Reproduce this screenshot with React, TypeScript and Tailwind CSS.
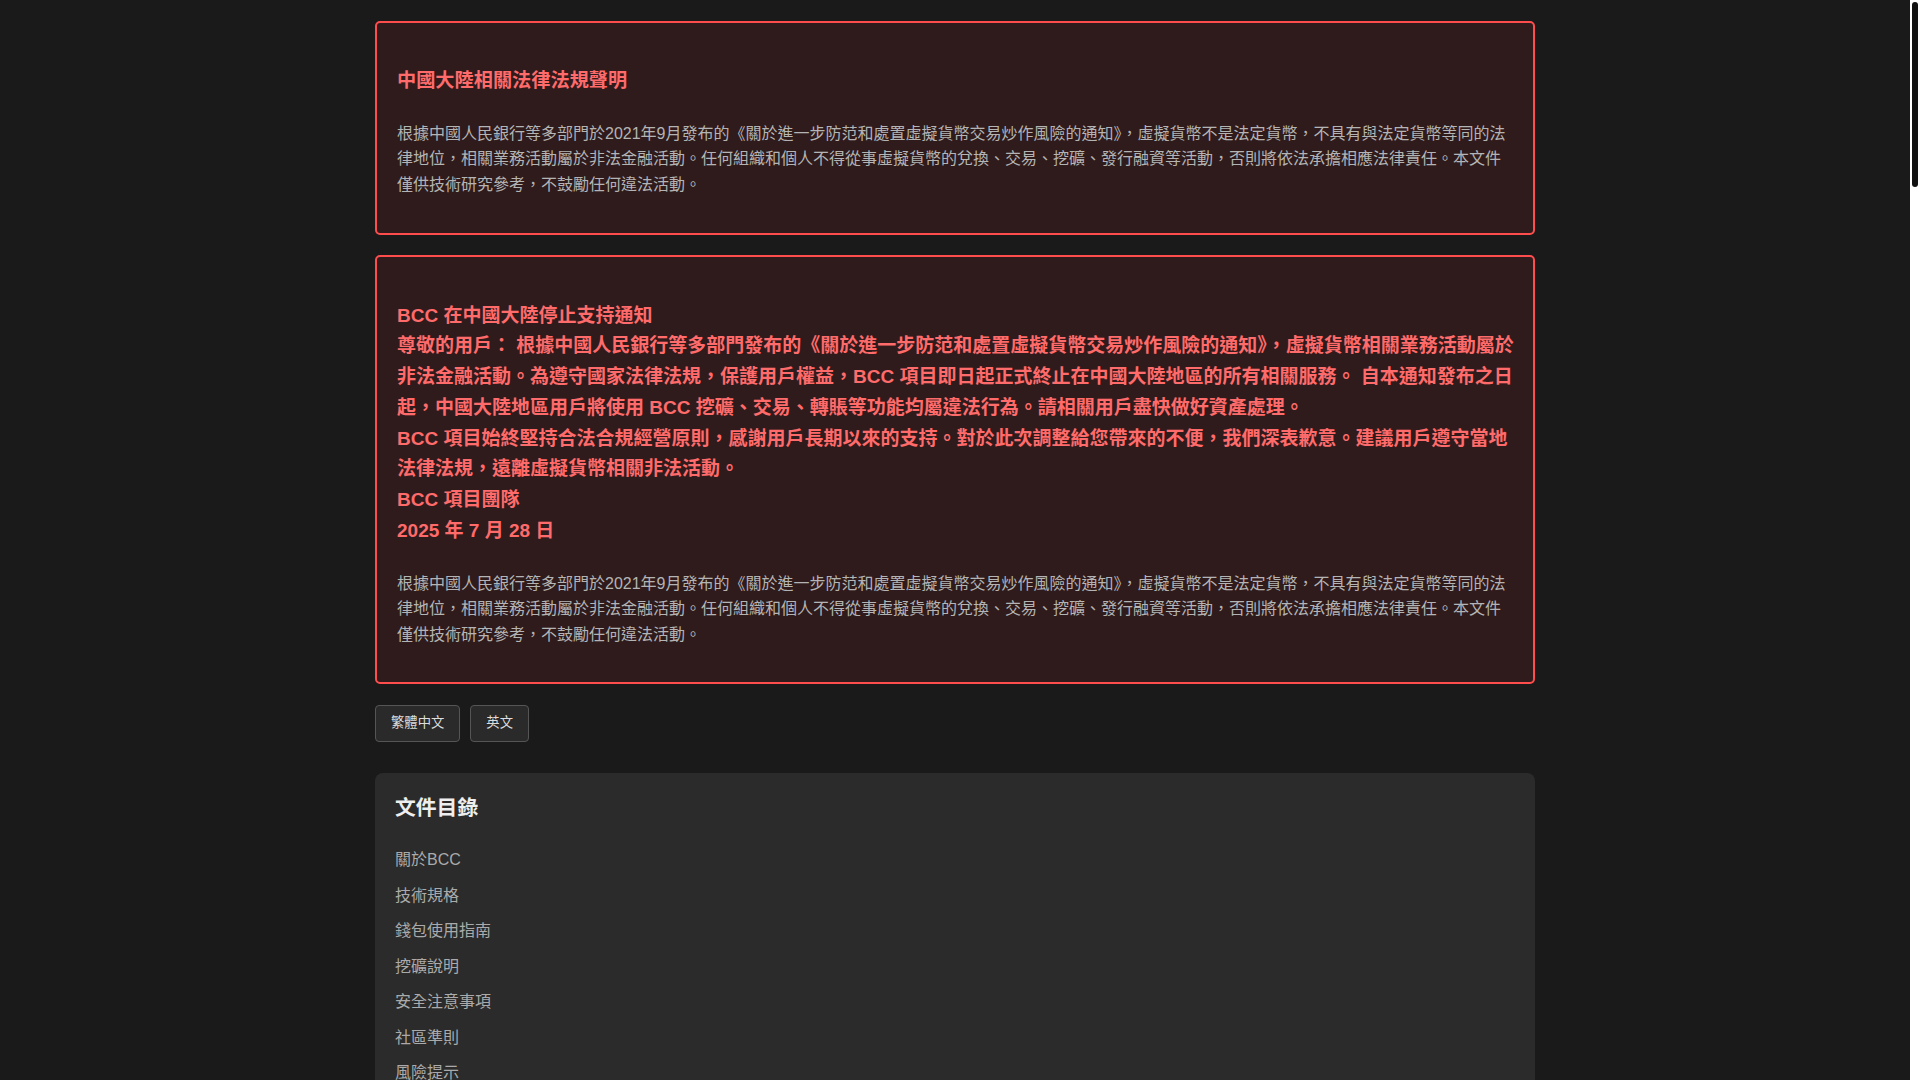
import React from "react";

var FONT = { fontFamily: '"Liberation Sans", "Noto Sans CJK TC", sans-serif' };

var LEGAL =
  "根據中國人民銀行等多部門於2021年9月發布的《關於進一步防范和處置虛擬貨幣交易炒作風險的通知》，虛擬貨幣不是法定貨幣，不具有與法定貨幣等同的法律地位，相關業務活動屬於非法金融活動。任何組織和個人不得從事虛擬貨幣的兌換、交易、挖礦、發行融資等活動，否則將依法承擔相應法律責任。本文件僅供技術研究參考，不鼓勵任何違法活動。";

var TOC = ["關於BCC", "技術規格", "錢包使用指南", "挖礦說明", "安全注意事項", "社區準則", "風險提示"];

// red warning panel
function Notice({ children, last }: { children: React.ReactNode; last: string }) {
  return (
    <div className="rounded-[5px] border-2 border-[#ff4d4d] bg-[#2f1b1c] px-5 pt-5 pb-5">
      {children}
      <p className={"text-[16px] leading-[1.6] text-[#b4b4b4] " + last}>{LEGAL}</p>
    </div>
  );
}

export default function App() {
  return (
    <div style={FONT} className="flex min-h-screen">
      <div className="min-h-screen flex-1 bg-[#1a1a1a]">
        <div className="mx-auto max-w-[1200px] px-5 pt-[21px] pb-10">
          <Notice last="mb-[15px]">
            <h3 className="mt-[23px] mb-[24px] text-[19.2px] font-bold leading-[1.6] text-[#ff6b6b]">
              中國大陸相關法律法規聲明
            </h3>
          </Notice>

          <div className="mt-[20px]">
            <Notice last="mb-[14px]">
              <div className="mt-[24px] mb-[24px] whitespace-nowrap text-[19px] font-bold leading-[30.8px] text-[#ff6b6b]">
                <div>BCC 在中國大陸停止支持通知</div>
                <div>
                  尊敬的用戶： 根據中國人民銀行等多部門發布的《關於進一步防范和處置虛擬貨幣交易炒作風險的通知》，虛擬貨幣相關業務活動屬於
                  <br />
                  非法金融活動。為遵守國家法律法規，保護用戶權益，BCC 項目即日起正式終止在中國大陸地區的所有相關服務。 自本通知發布之日
                  <br />
                  起，中國大陸地區用戶將使用 BCC 挖礦、交易、轉賬等功能均屬違法行為。請相關用戶盡快做好資產處理。
                </div>
                <div>
                  BCC 項目始終堅持合法合規經營原則，感謝用戶長期以來的支持。對於此次調整給您帶來的不便，我們深表歉意。建議用戶遵守當地
                  <br />
                  法律法規，遠離虛擬貨幣相關非法活動。
                </div>
                <div>BCC 項目團隊</div>
                <div>2025 年 7 月 28 日</div>
              </div>
            </Notice>
          </div>

          <div className="mt-[21px] flex gap-[10px]">
            <button className="h-[37px] rounded-[4px] border border-[#555] bg-[#2a2a2a] px-[15px] text-[13.33px] text-[#ddd]">
              繁體中文
            </button>
            <button className="h-[37px] rounded-[4px] border border-[#555] bg-[#2a2a2a] px-[15px] text-[13.33px] text-[#ddd]">
              英文
            </button>
          </div>

          <div className="mt-[31px] rounded-[8px] bg-[#2b2b2b] px-5 pt-[18px] pb-5">
            <h2 className="mb-[18px] text-[20.8px] font-bold leading-[1.6] text-[#eee]">文件目錄</h2>
            <ul>
              {TOC.map(function (t) {
                return (
                  <li key={t} className="py-[5px] text-[16px] leading-[1.6] text-[#aaa]">
                    {t}
                  </li>
                );
              })}
            </ul>
          </div>
        </div>
      </div>

      {/* page scrollbar */}
      <div className="sticky top-0 h-screen w-[10px] shrink-0 bg-white px-[2px] pt-[2px]">
        <div className="h-[185px] rounded-full bg-[#111]" />
      </div>
    </div>
  );
}
